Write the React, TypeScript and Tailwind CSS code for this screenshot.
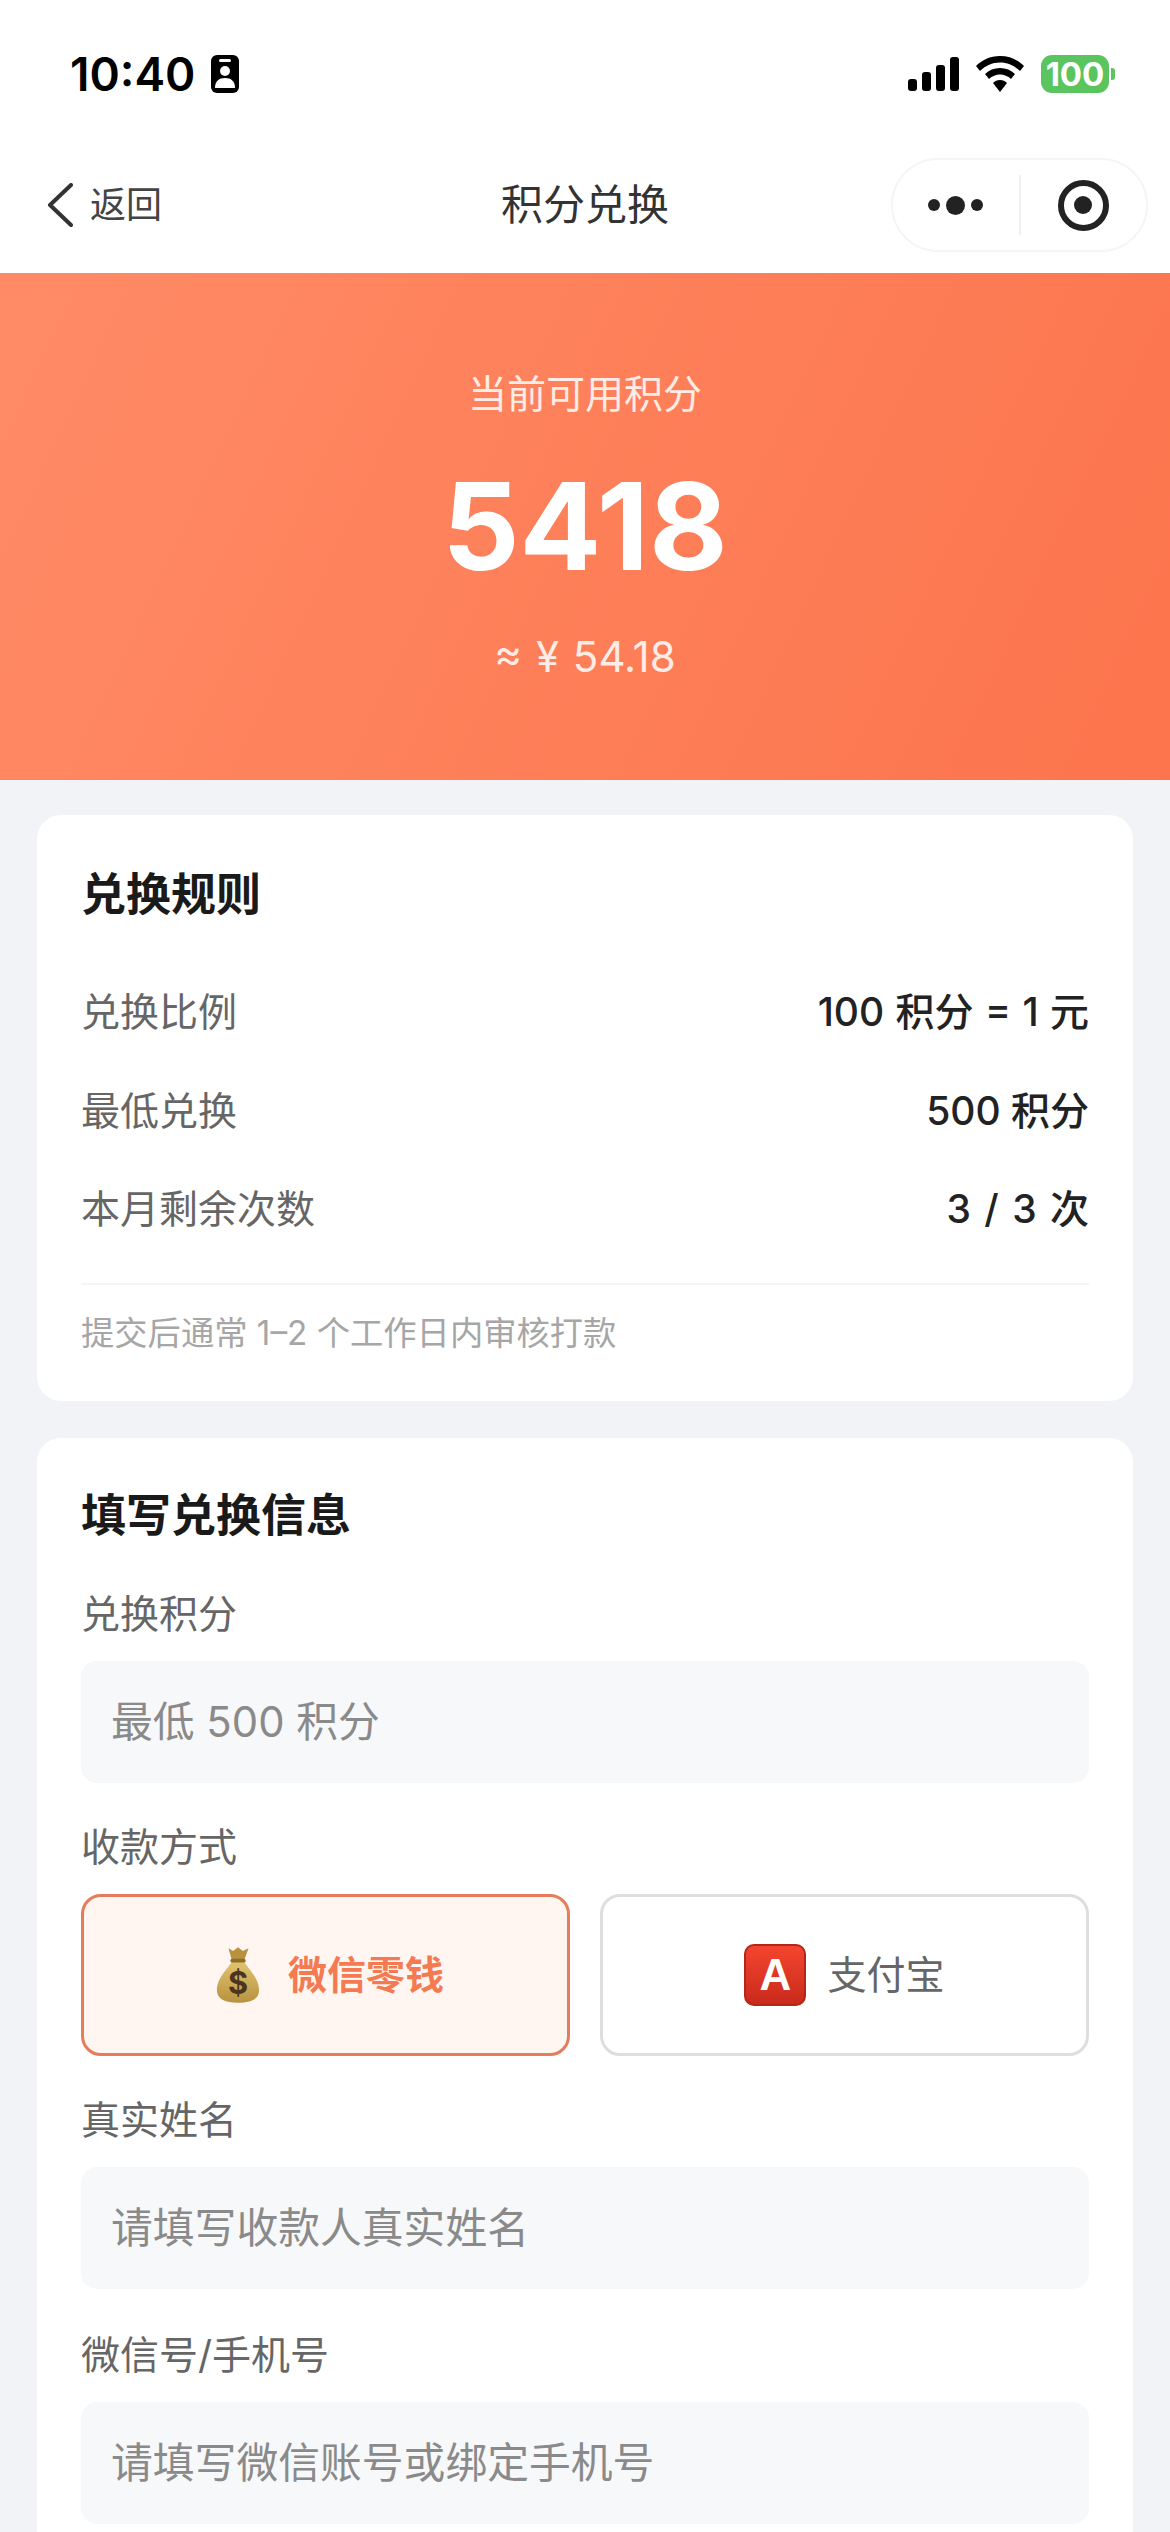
import { ReactNode } from "react";

const fontFamily = "font-['Inter','Noto_Sans_CJK_SC',sans-serif]";

function StatusBar() {
  return (
    <div className="flex h-[148px] items-center justify-between pl-[70px] pr-[55px]">
      <div className="flex items-center gap-[16px]">
        <span className="text-[46px] leading-[56px] font-semibold text-black">10:40</span>
        <svg width="28" height="38" viewBox="0 0 28 38">
          <rect x="0" y="0" width="28" height="38" rx="6" fill="#000" />
          <rect x="8" y="4" width="12" height="3" rx="1.5" fill="#fff" />
          <circle cx="14" cy="16" r="5" fill="#fff" />
          <path d="M4 33c0-7 4-10 10-10s10 3 10 10z" fill="#fff" />
        </svg>
      </div>
      <div className="flex items-center gap-[17px]">
        <svg width="51" height="34" viewBox="0 0 51 34">
          <rect x="0" y="22" width="9" height="12" rx="3" fill="#000" />
          <rect x="14" y="15" width="9" height="19" rx="3" fill="#000" />
          <rect x="28" y="8" width="9" height="26" rx="3" fill="#000" />
          <rect x="42" y="0" width="9" height="34" rx="3" fill="#000" />
        </svg>
        <svg width="48" height="36" viewBox="0 0 48 36">
          <path d="M24 0C34 0 42 4 48 10l-4 5C38 9.500 32 6.500 24 6.500S10 9.500 4 15l-4-5C6 4 14 0 24 0z" fill="#000" />
          <path d="M24 12c6 0 11 2 15 6l-4 5c-3-3-7-4.500-11-4.500S16 20 13 23l-4-5c4-4 9-6 15-6z" fill="#000" />
          <path d="M24 24c3 0 5 1 7 3l-7 9-7-9c2-2 4-3 7-3z" fill="#000" />
        </svg>
        <div className="flex items-center gap-[2px]">
          <div className="flex h-[38px] w-[68px] items-center justify-center rounded-[11px] bg-[#5ac45f] text-[33px] leading-none font-bold text-white">
            100
          </div>
          <div className="h-[12px] w-[4px] rounded-r-[3px] bg-[#5ac45f]" />
        </div>
      </div>
    </div>
  );
}

function NavBar() {
  return (
    <div className="relative flex h-[125px] items-start justify-between pl-[46px] pr-[22px]">
      <div className="flex items-center gap-[16px] pt-[35px]">
        <svg width="28" height="44" viewBox="0 0 28 44">
          <path d="M25 2 4 22l21 20" fill="none" stroke="#333" strokeWidth="4" strokeLinecap="round" strokeLinejoin="round" />
        </svg>
        <span className="text-[36px] leading-[44px] text-[#444]">返回</span>
      </div>
      <span className="absolute left-0 right-0 top-[32px] text-center text-[42px] leading-[50px] text-[#333]">积分兑换</span>
      <div className="mt-[10px] flex h-[94px] w-[257px] items-center rounded-[47px] border-2 border-[#f5f5f5] bg-white">
        <div className="flex h-[60px] flex-1 items-center justify-center gap-[6px] border-r-2 border-[#f0f0f0]">
          <span className="size-[12px] rounded-full bg-[#222]" />
          <span className="size-[19px] rounded-full bg-[#222]" />
          <span className="size-[12px] rounded-full bg-[#222]" />
        </div>
        <div className="flex flex-1 items-center justify-center">
          <div className="flex size-[51px] items-center justify-center rounded-full border-[6px] border-[#222]">
            <span className="size-[18px] rounded-full bg-[#222]" />
          </div>
        </div>
      </div>
    </div>
  );
}

function Hero() {
  return (
    <div className="flex h-[507px] flex-col items-center bg-[linear-gradient(115deg,#ff8b66,#fc744c)] text-white">
      <p className="mt-[98px] text-[39px] leading-[46px] text-white/85">当前可用积分</p>
      <p className="mt-[39px] text-[121px] leading-[140px] font-bold">5418</p>
      <p className="mt-[37px] text-[42px] leading-[48px] text-white/85 [word-spacing:2px]">≈ ¥ 54.18</p>
    </div>
  );
}

function RuleRow({ label, value, className }: { label: string; value: string; className?: string }) {
  return (
    <div className="flex h-[98.500px] items-center justify-between text-[39px]">
      <span className="text-[#666]">{label}</span>
      <span className={`font-medium text-[#222] ${className ?? ""}`}>{value}</span>
    </div>
  );
}

function Card({ children }: { children: ReactNode }) {
  return <div className="rounded-[24px] bg-white px-[44px]">{children}</div>;
}

function FieldLabel({ children }: { children: ReactNode }) {
  return <p className="text-[39px] leading-[46px] text-[#666]">{children}</p>;
}

function TextField({ placeholder }: { placeholder: string }) {
  return (
    <div className="mt-[24px] flex h-[122px] items-center rounded-[16px] bg-[#f7f8fa] px-[30px] text-[41.800px] text-[#8a8a8a]">
      {placeholder}
    </div>
  );
}

function MoneyBag() {
  return (
    <svg width="46" height="60" viewBox="0 0 48 60">
      <defs>
        <linearGradient id="bag" x1="0" y1="0" x2="0" y2="1">
          <stop offset="0" stopColor="#e2c572" />
          <stop offset="1" stopColor="#b8923f" />
        </linearGradient>
      </defs>
      <path d="M14 2l5 3 5-4 5 4 6-3-5 14H18z" fill="#b8923f" />
      <path d="M18 15c-3 7-16 17-16 31 0 9 8 13 22 13s22-4 22-13C46 32 33 22 30 15z" fill="url(#bag)" />
      <rect x="16" y="13" width="16" height="4" rx="2" fill="#8f6d2a" />
      <text x="24" y="50" textAnchor="middle" fontSize="32" fontWeight="700" fill="#4a3520">$</text>
    </svg>
  );
}

function PayOption({
  active,
  icon,
  label,
}: {
  active?: boolean;
  icon: ReactNode;
  label: string;
}) {
  return (
    <div
      className={
        active
          ? "flex h-[162px] items-center justify-center gap-[27px] rounded-[20px] border-[3px] border-[#e57c5c] bg-[#fff6f2] pl-[8px] text-[39px] font-bold text-[#f47a52]"
          : "flex h-[162px] items-center justify-center gap-[21px] rounded-[20px] border-[3px] border-[#dedede] bg-white text-[39px] text-[#666]"
      }
    >
      {icon}
      <span>{label}</span>
    </div>
  );
}

export default function App() {
  return (
    <div className={`h-[2532px] w-[1170px] overflow-hidden bg-[#f1f3f6] ${fontFamily}`}>
      <div className="bg-white">
        <StatusBar />
        <NavBar />
      </div>
      <Hero />
      <div className="flex flex-col gap-[37px] px-[37px] pt-[35px]">
        <Card>
          <div className="h-[586px]">
            <h2 className="pt-[53px] text-[45px] leading-[54px] font-bold text-[#1a1a1a]">兑换规则</h2>
            <div className="mt-[41px]">
              <RuleRow label="兑换比例" value="100 积分 = 1 元" className="[word-spacing:1px]" />
              <RuleRow label="最低兑换" value="500 积分" />
              <RuleRow label="本月剩余次数" value="3 / 3 次" className="[word-spacing:3px]" />
            </div>
            <div className="mt-[24px] border-t-2 border-[#f5f5f5] pt-[28px] text-[33.300px] leading-[40px] text-[#a6a6a6]">
              提交后通常 1–2 个工作日内审核打款
            </div>
          </div>
        </Card>
        <Card>
          <div className="pb-[60px]">
            <h2 className="pt-[51px] text-[45px] leading-[54px] font-bold text-[#1a1a1a]">填写兑换信息</h2>
            <div className="mt-[48px]">
              <FieldLabel>兑换积分</FieldLabel>
              <TextField placeholder="最低 500 积分" />
            </div>
            <div className="mt-[41px]">
              <FieldLabel>收款方式</FieldLabel>
              <div className="mt-[24px] grid grid-cols-2 gap-[30px]">
                <PayOption active icon={<MoneyBag />} label="微信零钱" />
                <PayOption
                  icon={
                    <div className="flex size-[62px] items-center justify-center rounded-[10px] border-2 border-[#b3261a] bg-gradient-to-b from-[#f4452f] to-[#c92a1c] font-['Liberation_Sans'] text-[44px] font-bold text-white">
                      A
                    </div>
                  }
                  label="支付宝"
                />
              </div>
            </div>
            <div className="mt-[41px]">
              <FieldLabel>真实姓名</FieldLabel>
              <TextField placeholder="请填写收款人真实姓名" />
            </div>
            <div className="mt-[43px]">
              <FieldLabel>微信号/手机号</FieldLabel>
              <TextField placeholder="请填写微信账号或绑定手机号" />
            </div>
          </div>
        </Card>
      </div>
    </div>
  );
}
